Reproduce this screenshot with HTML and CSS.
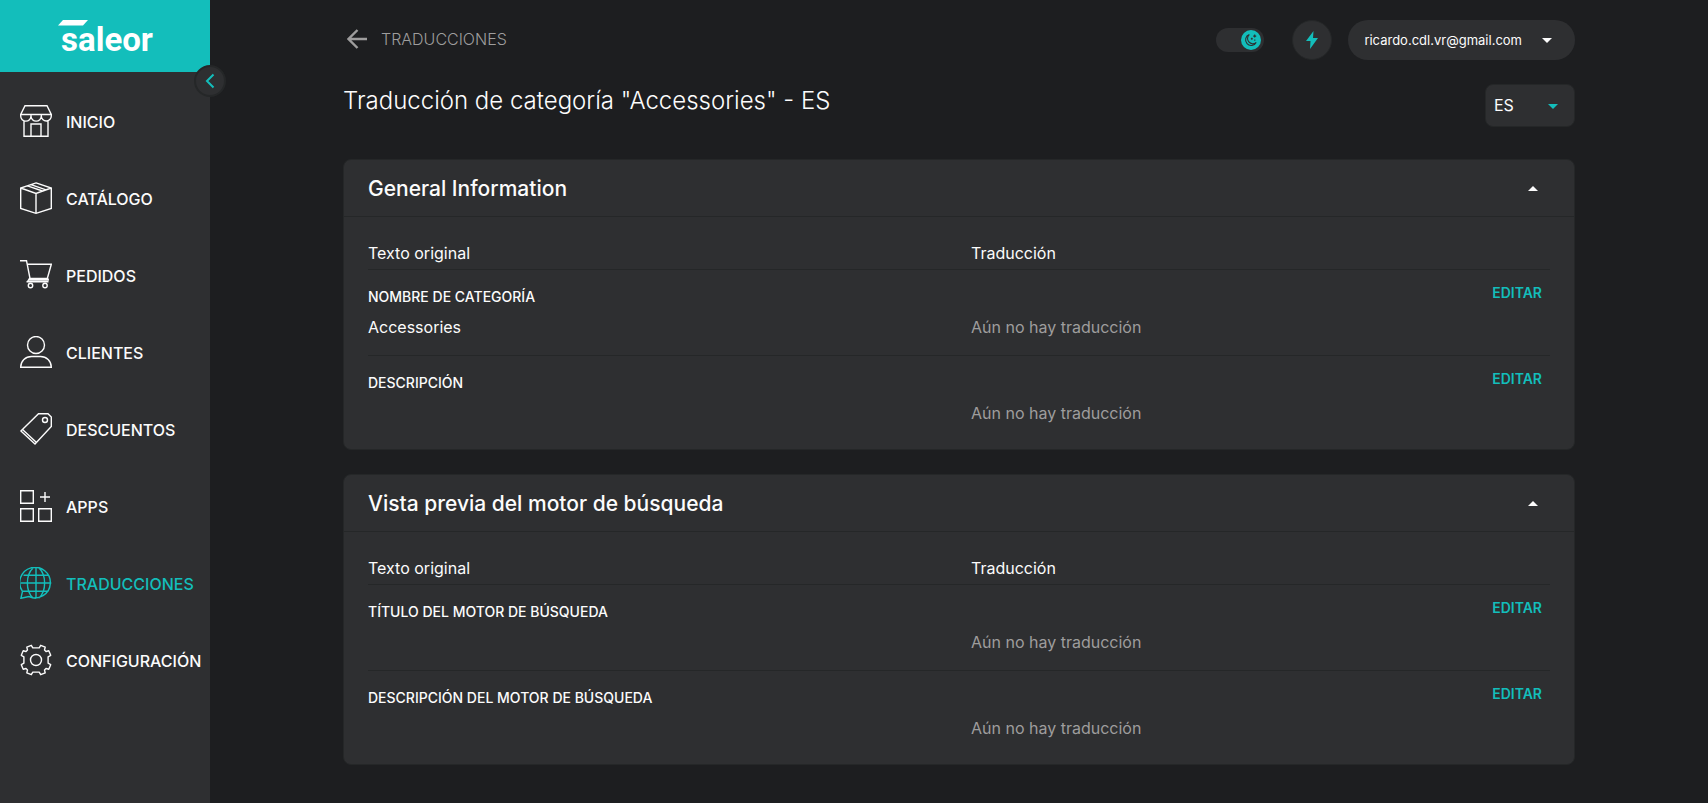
FILE: index.html
```html
<!DOCTYPE html>
<html lang="es">
<head>
<meta charset="utf-8">
<title>Traducción de categoría</title>
<link rel="stylesheet" href="styles.css">
</head>
<body>
<div class="app">
  <aside class="sidebar">
    <a class="brand" href="#" aria-label="saleor">
      <svg class="brand-bar" viewBox="0 0 30 6" width="30" height="6" aria-hidden="true"><path d="M5 0H30L25 5.500H0Z" fill="#fff"/></svg>
      <span class="brand-name">saleor</span>
    </a>
    <button class="collapse" type="button" aria-label="Contraer menú">
      <svg viewBox="0 0 10 16" width="10" height="16"><path d="M8.500 1.500L2 8l6.500 6.500" fill="none" stroke="currentColor" stroke-width="2"/></svg>
    </button>
    <nav class="menu">
      <a class="menu-item" href="#"><svg class="icon" viewBox="0 0 32 32"><path d="M5 .700H27L31.300 9.500H.700ZM.700 9.500V11a5 5 0 0 0 10.300 0V9.500M11 11a5 5 0 0 0 10.300 0V9.500M21.300 11a5 5 0 0 0 10 0V9.500M4 15.500V31.300H28V15.500M11 31V19H21V31"/></svg>INICIO</a>
      <a class="menu-item" href="#"><svg class="icon" viewBox="0 0 32 32"><path d="M16 .900L31.300 6V26.500L16 31.300.700 26.500V6ZM.700 6L16 11.500 31.300 6M16 11.500V31M7.500 3.800L22.500 9M11 2.600L26 7.800"/></svg>CATÁLOGO</a>
      <a class="menu-item" href="#"><svg class="icon" viewBox="0 0 32 32"><path d="M0 1.700H6.500L10 19.500M7.200 5.300H31.300L27.300 19.500H9.500L7.500 22.700M6.500 22.700H28.500M9 21H28.200V19.500"/><circle cx="10.500" cy="26.500" r="2.200"/><circle cx="25" cy="26.500" r="2.200"/></svg>PEDIDOS</a>
      <a class="menu-item" href="#"><svg class="icon" viewBox="0 0 32 32"><circle cx="16" cy="9" r="8.500"/><path d="M.700 31.300C.700 25 5.500 20.500 11.500 20.500H20.500C26.500 20.500 31.300 25 31.300 31.300Z"/></svg>CLIENTES</a>
      <a class="menu-item" href="#"><svg class="icon" viewBox="0 0 32 32"><path d="M.900 18L18.500.800H28L31.300 4V13.500L15 31ZM2.500 16.500L16.500 29.500M.900 18L15 31"/><circle cx="25" cy="7" r="2.500"/></svg>DESCUENTOS</a>
      <a class="menu-item" href="#"><svg class="icon" viewBox="0 0 32 32"><path d="M.700.700H13.300V13.300H.700ZM.700 18.700H13.300V31.300H.700ZM18.700 18.700H31.300V31.300H18.700ZM25 2V12M20 7H30"/></svg>APPS</a>
      <a class="menu-item active" href="#" aria-current="page"><svg class="icon" viewBox="0 0 32 32"><path d="M2.500 24.300A15.300 15.300 0 1 1 9 29.600L.900 31.300ZM9 29.600A15.300 15.300 0 0 0 16 31.300M16 .700V31.300M.700 16H31.300M3.500 8.300H28.500M3 24.300H28.500M13 .900C5.500 8 5.500 24 13 31M19 .900C26.500 8 26.500 24 19 31"/></svg>TRADUCCIONES</a>
      <a class="menu-item" href="#"><svg class="icon" viewBox="0 0 32 32"><circle cx="16" cy="16" r="5.500"/><path d="M11.300 1.300L12.800 3.900H19.200L20.700 1.300L25.200 3.200L24.500 6L26 7.500L28.800 6.800L30.700 11.300L28.100 12.800V19.200L30.700 20.700L28.800 25.200L26 24.500L24.500 26L25.200 28.800L20.700 30.700L19.200 28.100H12.800L11.300 30.700L6.800 28.800L7.500 26L6 24.500L3.200 25.200L1.300 20.700L3.900 19.200V12.800L1.300 11.300L3.200 6.800L6 7.500L7.500 6L6.800 3.200Z" stroke-linejoin="round"/></svg>CONFIGURACIÓN</a>
    </nav>
  </aside>

  <main class="main">
    <div class="container">
      <header class="topbar">
        <a class="back" href="#">
          <svg viewBox="0 0 20 20" width="20" height="20" aria-hidden="true"><path d="M10.500 1L1.500 10l9 9M1.500 10H20" fill="none" stroke="currentColor" stroke-width="2.400"/></svg>
          TRADUCCIONES
        </a>
        <div class="tools">
          <label class="toggle">
            <input type="checkbox" checked aria-label="Tema oscuro">
            <span class="knob"><svg viewBox="0 0 20 20" width="20" height="20"><path d="M8.300 4.600A5.600 5.600 0 1 0 15.200 12.400A5 5 0 0 1 8.300 4.600ZM10.800 7.800V9.800M9.800 8.800H11.800M13.700 4.600V7.600M12.200 6.100H15.200M13.800 9.500V10.700" fill="none" stroke="#2e2f31" stroke-width="1.100"/></svg></span>
          </label>
          <button class="action" type="button" aria-label="Acciones">
            <svg viewBox="0 0 12 18" width="12" height="18"><path d="M7.500 0L0 10H4.500L4 18L12 7H7Z" fill="currentColor"/></svg>
          </button>
          <button class="account" type="button">
            ricardo.cdl.vr@gmail.com
            <svg viewBox="0 0 10 5" width="10" height="5" aria-hidden="true"><path d="M0 0H10L5 5Z" fill="currentColor"/></svg>
          </button>
        </div>
      </header>

      <div class="heading">
        <h1>Traducción de categoría "Accessories" - ES</h1>
        <div class="language">
          <select aria-label="Idioma"><option>ES</option></select>
          <svg viewBox="0 0 10 5" width="10" height="5" aria-hidden="true"><path d="M0 0H10L5 5Z" fill="currentColor"/></svg>
        </div>
      </div>

      <section class="card">
        <div class="card-head">
          <h2>General Information</h2>
          <button class="fold" type="button" aria-label="Contraer"><svg viewBox="0 0 10 5" width="10" height="5"><path d="M0 5H10L5 0Z" fill="currentColor"/></svg></button>
        </div>
        <div class="card-body">
          <div class="columns"><span>Texto original</span><span>Traducción</span></div>
          <div class="field">
            <h3>NOMBRE DE CATEGORÍA</h3><button class="edit" type="button">EDITAR</button>
            <p>Accessories</p><p class="empty">Aún no hay traducción</p>
          </div>
          <div class="field">
            <h3>DESCRIPCIÓN</h3><button class="edit" type="button">EDITAR</button>
            <p></p><p class="empty">Aún no hay traducción</p>
          </div>
        </div>
      </section>

      <section class="card">
        <div class="card-head">
          <h2>Vista previa del motor de búsqueda</h2>
          <button class="fold" type="button" aria-label="Contraer"><svg viewBox="0 0 10 5" width="10" height="5"><path d="M0 5H10L5 0Z" fill="currentColor"/></svg></button>
        </div>
        <div class="card-body">
          <div class="columns"><span>Texto original</span><span>Traducción</span></div>
          <div class="field">
            <h3>TÍTULO DEL MOTOR DE BÚSQUEDA</h3><button class="edit" type="button">EDITAR</button>
            <p></p><p class="empty">Aún no hay traducción</p>
          </div>
          <div class="field">
            <h3>DESCRIPCIÓN DEL MOTOR DE BÚSQUEDA</h3><button class="edit" type="button">EDITAR</button>
            <p></p><p class="empty">Aún no hay traducción</p>
          </div>
        </div>
      </section>
    </div>
  </main>
</div>
</body>
</html>
```
FILE: styles.css
```css
:root {
  --bg: #1d1e20;
  --paper: #2e2f31;
  --line: #252728;
  --teal: #13bebb;
  --text: #fcfcfc;
  --muted: #9e9d9d;
}

* { box-sizing: border-box; }

body {
  margin: 0;
  background: var(--bg);
  color: var(--text);
  font-family: Inter, "Liberation Sans", sans-serif;
  font-size: 16px;
}

button, select {
  font: inherit;
  color: inherit;
  border: 0;
  background: none;
  padding: 0;
}

a { color: inherit; text-decoration: none; }
h1, h2, h3, p { margin: 0; }
svg { display: block; flex: none; }

.app { display: flex; min-height: 100vh; }

.sidebar {
  position: relative;
  flex: none;
  width: 210px;
  background: var(--paper);
}

.brand {
  position: relative;
  display: flex;
  justify-content: center;
  align-items: center;
  height: 72px;
  background: var(--teal);
}

.brand-bar { position: absolute; left: 58px; top: 20px; }

.brand-name {
  padding: 8px 0 0 4px;
  color: #fff;
  font-family: Roboto, sans-serif;
  font-size: 33px;
  font-weight: 700;
  line-height: 40px;
}

.collapse {
  position: absolute;
  top: 65px;
  right: -16px;
  display: flex;
  align-items: center;
  justify-content: center;
  width: 32px;
  height: 32px;
  border: 2px solid var(--line);
  border-radius: 50%;
  background: var(--paper);
  color: var(--teal);
}

.menu {
  display: flex;
  flex-direction: column;
  gap: 45px;
  padding: 33px 0 33px 20px;
}

.menu-item {
  display: flex;
  align-items: flex-start;
  gap: 14px;
  height: 32px;
  font-weight: 500;
  line-height: 34px;
  white-space: nowrap;
}

.menu-item.active { color: var(--teal); }

.icon {
  width: 32px;
  height: 32px;
  fill: none;
  stroke: currentColor;
  stroke-width: 1.4;
}

.main { flex: 1; min-width: 0; }

.container {
  max-width: 1280px;
  margin: 0 auto;
  padding: 20px 24px 38px;
}

.topbar, .tools, .heading, .card-head {
  display: flex;
  justify-content: space-between;
  align-items: center;
}

.back {
  display: flex;
  align-items: center;
  gap: 14px;
  padding: 0 0 2px 4px;
  color: var(--muted);
  font-weight: 300;
}

.toggle {
  display: flex;
  justify-content: flex-end;
  align-items: center;
  width: 48px;
  height: 24px;
  margin-right: 28px;
  padding: 3px;
  border-radius: 12px;
  background: var(--paper);
}

.toggle input { position: absolute; opacity: 0; }

.knob { border-radius: 50%; background: var(--teal); }

.action {
  display: flex;
  align-items: center;
  justify-content: center;
  width: 40px;
  height: 40px;
  margin-right: 16px;
  border: 1px solid var(--line);
  border-radius: 50%;
  background: var(--paper);
  color: var(--teal);
}

.account {
  display: flex;
  align-items: center;
  gap: 20px;
  height: 40px;
  padding: 0 23px 0 16px;
  border-radius: 20px;
  background: var(--paper);
  font-size: 13px;
}

.heading {
  align-items: flex-start;
  margin: 24px 0 32px;
}

.heading h1 {
  font-size: 24px;
  font-weight: 300;
  line-height: 34px;
}

.language { position: relative; color: var(--teal); }

.language select {
  appearance: none;
  width: 90px;
  height: 43px;
  padding: 0 8px 2px;
  border: 1px solid var(--line);
  border-radius: 8px;
  background: var(--paper);
  color: var(--text);
}

.language svg {
  position: absolute;
  right: 17px;
  top: 20px;
  pointer-events: none;
}

.card {
  border: 1px solid var(--line);
  border-radius: 8px;
  background: var(--paper);
}

.card + .card { margin-top: 24px; }

.card-head {
  height: 57px;
  padding: 0 36px 0 24px;
  border-bottom: 1px solid var(--line);
}

.card-head h2 {
  font-size: 21px;
  font-weight: 500;
}

.card-body { padding: 24px 24px 8px; }

.columns, .field {
  display: grid;
  grid-template-columns: 1fr 1fr;
  column-gap: 24px;
}

.columns { line-height: 24px; padding-bottom: 4px; }

.field {
  grid-template-rows: 36px 26px;
  padding: 8px 0 15px;
  border-top: 1px solid var(--line);
}

.field h3 {
  font-size: 14px;
  font-weight: 500;
  line-height: 38px;
}

.field p { line-height: 26px; }
.field .empty { color: var(--muted); }

.edit {
  justify-self: end;
  align-self: start;
  height: 28px;
  padding: 0 8px;
  color: var(--teal);
  font-size: 14px;
  font-weight: 600;
}
```
